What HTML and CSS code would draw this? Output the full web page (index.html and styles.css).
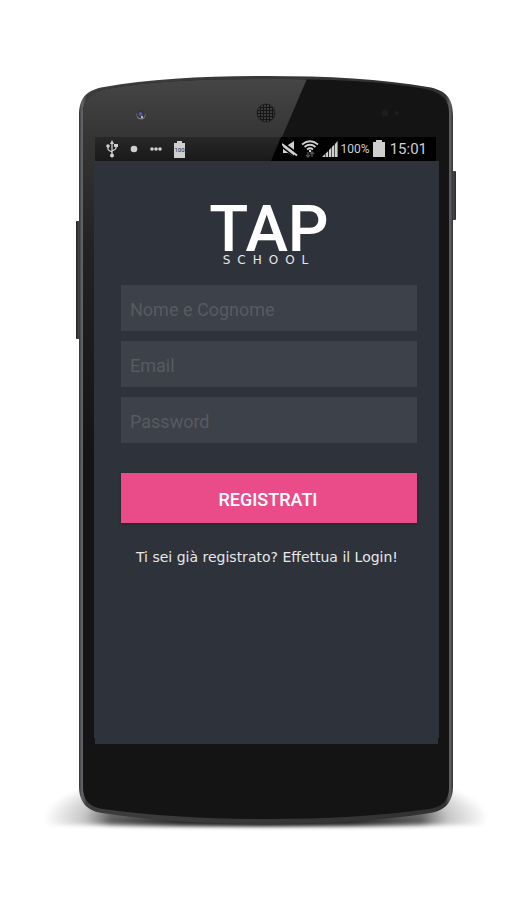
FILE: index.html
```html
<!DOCTYPE html>
<html lang="it">
<head>
<meta charset="utf-8">
<meta name="viewport" content="width=device-width, initial-scale=1">
<title>Tap School</title>
<link rel="stylesheet" href="styles.css">
</head>
<body>
<main class="device">
  <svg class="device-art" viewBox="0 0 532 900" aria-hidden="true">
    <defs>
      <linearGradient id="rim" x1="0" x2="1"><stop offset="0" stop-color="#303133"/><stop offset=".008" stop-color="#65676a"/><stop offset=".02" stop-color="#3c3d3f"/><stop offset=".98" stop-color="#303132"/><stop offset=".992" stop-color="#626366"/><stop offset="1" stop-color="#303133"/></linearGradient>
      <linearGradient id="glare" x1="0" y1="80" x2="0" y2="460" gradientUnits="userSpaceOnUse"><stop offset="0" stop-color="#454545"/><stop offset=".15" stop-color="#353535"/><stop offset=".45" stop-color="#222"/><stop offset="1" stop-color="#141414"/></linearGradient>
      <linearGradient id="barshade" x1="0" y1="137" x2="0" y2="161" gradientUnits="userSpaceOnUse"><stop offset="0" stop-color="#282828"/><stop offset="1" stop-color="#191919"/></linearGradient>
      <linearGradient id="key" x1="0" x2="1"><stop offset="0" stop-color="#202122"/><stop offset=".5" stop-color="#48494b"/><stop offset="1" stop-color="#28292b"/></linearGradient>
      <radialGradient id="ground"><stop offset="0" stop-color="#000" stop-opacity=".75"/><stop offset=".7" stop-color="#000" stop-opacity=".6"/><stop offset=".82" stop-color="#000" stop-opacity=".22"/><stop offset="1" stop-color="#000" stop-opacity="0"/></radialGradient>
      <linearGradient id="contact" x1="100" x2="432" y1="0" y2="0" gradientUnits="userSpaceOnUse"><stop offset="0" stop-opacity="0"/><stop offset=".25" stop-opacity=".6"/><stop offset=".5" stop-opacity=".8"/><stop offset=".75" stop-opacity=".6"/><stop offset="1" stop-opacity="0"/></linearGradient>
      <filter id="soft" x="-20%" y="-200%" width="140%" height="500%"><feGaussianBlur stdDeviation="2"/></filter>
      <clipPath id="face"><path d="M83 113C83 99 91 93 106 89C151 81 204 79 266 79S381 81 426 89C441 93 449 99 449 113V787C449 801 442 807 429 809C380 816 322 819 266 819S152 816 103 809C90 807 83 801 83 787Z"/></clipPath>
      <pattern id="mesh" width="3" height="3" patternUnits="userSpaceOnUse"><rect width="3" height="3" fill="#161616"/><circle cx="1" cy="1" r=".8" fill="#6c6c6c"/></pattern>
      <clipPath id="floor"><rect x="30" y="740" width="472" height="85"/></clipPath>
    </defs>
    <g filter="url(#soft)"><g clip-path="url(#floor)">
      <ellipse cx="266" cy="818" rx="222" ry="54" fill="url(#ground)"/>
    </g></g>
    <rect x="100" y="818" width="332" height="8" fill="url(#contact)" filter="url(#soft)"/>
    <rect x="76" y="221" width="6" height="118" rx="1" fill="url(#key)"/>
    <rect x="450" y="171" width="6" height="49" rx="1" fill="url(#key)"/>
    <path fill="url(#rim)" d="M79 116C79 97 87 90 104 87C150 79 204 76 266 76S382 79 428 87C445 90 453 97 453 116V786C453 803 444 811 430 813C382 821 324 824 266 824S150 821 102 813C88 811 79 803 79 786Z"/>
    <path fill="#141414" d="M83 113C83 99 91 93 106 89C151 81 204 79 266 79S381 81 426 89C441 93 449 99 449 113V787C449 801 442 807 429 809C380 816 322 819 266 819S152 816 103 809C90 807 83 801 83 787Z"/>
    <g clip-path="url(#face)">
      <path fill="url(#glare)" d="M80 70H310L306 81L140 470H80Z"/>
    </g>
    <path d="M95 137H436V162H95Z" fill="#010101"/>
    <path d="M95 137H281L271 161H95Z" fill="url(#barshade)"/>
    <circle cx="141" cy="115" r="4.600" fill="#777"/><circle cx="141" cy="114" r="4" fill="#34343f"/><circle cx="140.500" cy="114" r="2" fill="#5656a8"/><circle cx="142" cy="117" r="1" fill="#ddd"/>
    <circle cx="266" cy="113" r="9" fill="url(#mesh)" stroke="#202020"/>
    <circle cx="385" cy="113" r="3.500" fill="#1d1d1d"/><circle cx="397" cy="113" r="2.200" fill="#1d1d1d"/>
    <path fill="#2e323a" d="M94 161H439V738H438V744H95V738H94Z"/>
  </svg>

  <div class="screen">
    <header class="status">
      <div class="status-left">
        <svg width="12" height="18" viewBox="0 0 12 18" aria-hidden="true"><g stroke="#cfcfcf" fill="none" stroke-width="1.300"><path d="M6 2V15M2 6V9Q2 10 4 11L6 12M10 5V8Q10 9 8 10L6 11"/></g><g fill="#cfcfcf"><path d="M6 0L8 4H4ZM8 4H12V7H8Z"/><circle cx="2" cy="6" r="1.800"/><circle cx="6" cy="15.500" r="2"/></g></svg>
        <svg width="8" height="18" viewBox="0 0 8 18" aria-hidden="true"><circle cx="4" cy="9" r="3.300" fill="#cfcfcf"/></svg>
        <svg width="12" height="18" viewBox="0 0 12 18" aria-hidden="true"><g fill="#cfcfcf"><circle cx="2" cy="9" r="1.800"/><circle cx="6" cy="9" r="1.800"/><circle cx="10" cy="9" r="1.800"/></g></svg>
        <span class="charge">100</span>
      </div>
      <div class="status-right">
        <svg width="16" height="18" viewBox="0 0 16 18" aria-hidden="true"><path fill="#cfcfcf" d="M1 5H6L12 1V17L6 13H1Z"/><path d="M0 2L16 14" stroke="#000" stroke-width="2"/><path d="M0 7L14 18" stroke="#000" stroke-width="1.500"/><path d="M0 4L15 15.500" stroke="#cfcfcf" stroke-width="2"/></svg>
        <svg width="18" height="18" viewBox="0 0 18 18" aria-hidden="true"><g fill="none" stroke="#cfcfcf" stroke-width="1.700"><path d="M1 4.500Q9-2 17 4.500M3.500 7Q9 2.500 14.500 7M6 9.500Q9 7 12 9.500"/></g><circle cx="9" cy="11" r="1.200" fill="#cfcfcf"/><path d="M7 17V12M5 15L7 17L9 15M11 17V12M9 14L11 12L13 14" fill="none" stroke="#555" stroke-width="1.300"/></svg>
        <svg width="16" height="18" viewBox="0 0 16 18" aria-hidden="true"><path fill="#cfcfcf" d="M0 17L3 14V17ZM3.600 13.400L6.200 11V17H3.600ZM7 10L9.400 7.500V17H7ZM10 7L12.400 4.500V17H10ZM13 4L15.600 1V17H13Z"/></svg>
        <span class="percent">100%</span>
        <svg width="12" height="18" viewBox="0 0 12 18" aria-hidden="true"><path fill="#cfcfcf" d="M3 0H9V2H12V17H0V2H3Z"/></svg>
        <time class="clock">15:01</time>
      </div>
    </header>

    <section class="signup">
      <h1 class="brand"><span class="brand-name">TAP</span><span class="brand-sub">SCHOOL</span></h1>
      <form class="form">
        <input class="field" type="text" placeholder="Nome e Cognome" aria-label="Nome e Cognome">
        <input class="field" type="email" placeholder="Email" aria-label="Email">
        <input class="field" type="password" placeholder="Password" aria-label="Password">
        <button class="submit" type="submit">REGISTRATI</button>
      </form>
      <a class="login" href="#login">Ti sei già registrato? Effettua il Login!</a>
    </section>
  </div>
</main>
</body>
</html>
```
FILE: styles.css
```css
* { box-sizing: border-box; }

body {
  margin: 0;
  background: #fff;
  font-family: Roboto, "Liberation Sans", sans-serif;
}

.device {
  position: relative;
  max-width: 532px;
  aspect-ratio: 532 / 900;
  margin: 0 auto;
  padding: 137px 94px 0 95px;
}

.device-art {
  position: absolute;
  inset: 0;
  width: 100%;
}

.screen { position: relative; }

.status {
  display: flex;
  align-items: center;
  justify-content: space-between;
  height: 24px;
  padding: 0 11px;
  color: #cfcfcf;
}

.status-left,
.status-right {
  display: flex;
  align-items: center;
}

.status-left { gap: 12px; }
.status-right { gap: 3px; }

.charge {
  width: 11px;
  height: 17px;
  background: linear-gradient(#cfcfcf, #cfcfcf) center top / 5px 2px no-repeat,
    linear-gradient(#cfcfcf, #cfcfcf) center bottom / 11px 15px no-repeat;
  color: #222;
  font-size: 6px;
  line-height: 18px;
  text-align: center;
}

.percent { font-size: 12px; }

.clock {
  margin-left: 2px;
  font-size: 15px;
}

.signup {
  display: flex;
  flex-direction: column;
  padding: 45px 21px 0 26px;
}

.brand {
  display: flex;
  flex-direction: column;
  align-items: center;
  margin: 0;
  color: #fff;
}

.brand-name {
  font-size: 64px;
  font-weight: 500;
  line-height: 48px;
}

.brand-sub {
  color: #e6e7e8;
  font-family: "DejaVu Sans", sans-serif;
  font-size: 12px;
  font-weight: 400;
  line-height: 12px;
  letter-spacing: 7px;
}

.form {
  display: flex;
  flex-direction: column;
  gap: 10px;
  margin-top: 19px;
}

.field {
  width: 100%;
  height: 46px;
  padding: 2px 9px 0;
  border: 0;
  border-radius: 0;
  background: #3d4149;
  color: #fff;
  font: 18px Roboto, sans-serif;
}

.field::placeholder {
  color: #575b62;
  opacity: 1;
}

.submit {
  height: 50px;
  margin-top: 20px;
  padding: 2px 2px 0 0;
  border: 0;
  background: #ea4c89;
  box-shadow: 0 1px 2px #22252b;
  color: #fff;
  font: 500 18px Roboto, sans-serif;
}

.login {
  margin-top: 25px;
  padding-right: 4px;
  color: #e6e7e8;
  font: 14px/18px "DejaVu Sans", sans-serif;
  text-align: center;
  text-decoration: none;
  white-space: nowrap;
}
```
